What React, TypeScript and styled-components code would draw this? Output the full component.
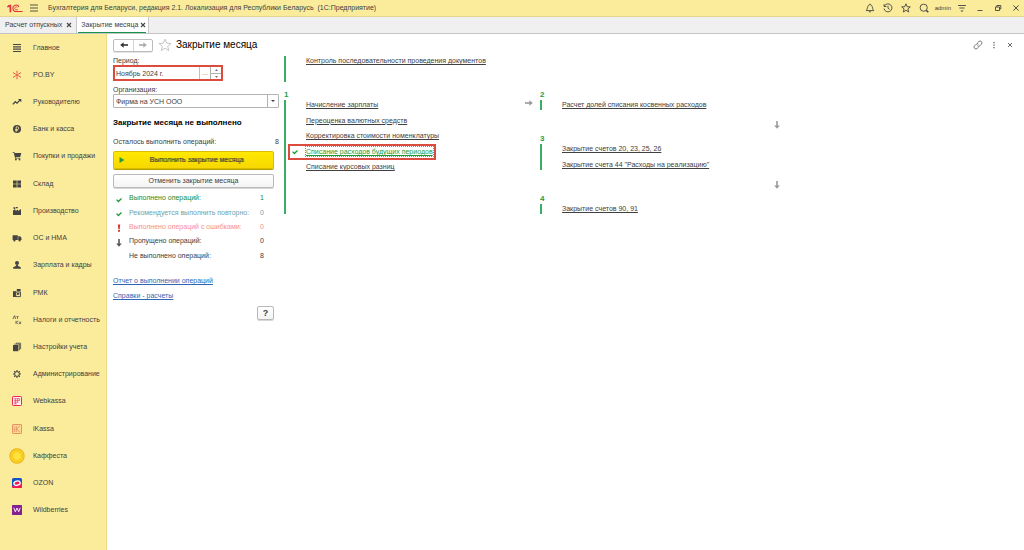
import React from "react";
import styled, { createGlobalStyle, css } from "styled-components";

const GlobalStyle = createGlobalStyle`
  *, *::before, *::after { box-sizing: border-box; }
  body {
    margin: 0;
    background: #fff;
    color: #404040;
    font: 7px/10px "Liberation Sans", Arial, sans-serif;
  }
  button, input, select { font: inherit; color: inherit; }
  h1, h2, p, ul, dl, dd, dt { margin: 0; padding: 0; }
  ul { list-style: none; }
`;

const Page = styled.div`
  display: flex;
  flex-direction: column;
  min-height: 100vh;
`;

const Header = styled.header`
  display: flex;
  align-items: center;
  height: 17px;
  padding: 0 3px 0 7px;
  background: #fbec9c;
  border-bottom: 1px solid #e3d68e;
`;

const AppName = styled.span`
  flex: 1;
  margin-left: 9px;
  white-space: pre;
`;

const HeaderTools = styled.div`
  display: flex;
  align-items: center;
  gap: 8px;
`;

const WindowTools = styled(HeaderTools)`
  margin-left: 8px;
`;

const UserName = styled.span`
  margin: 0 -2px;
  font-size: 6px;
`;

const IconButton = styled.button`
  display: flex;
  align-items: center;
  justify-content: center;
  width: 10px;
  height: 10px;
  padding: 0;
  border: 0;
  background: none;
`;

const MenuButton = styled(IconButton)`
  margin-left: 6px;
`;

const Tabs = styled.nav`
  display: flex;
  height: 17px;
  background: #f0f0f0;
  border-bottom: 1px solid #c4c4c4;
`;

const Tab = styled.div<{ $active?: boolean }>`
  display: flex;
  align-items: center;
  gap: 4px;
  padding: 0 4px 0 5px;
  border-right: 1px solid #c8c8c8;
  ${(p) =>
    p.$active &&
    css`
      padding: 0 2px 0 1px;
      background: #fff;
    `}
`;

const TabLink = styled.a`
  color: inherit;
  text-decoration: none;
`;

const ActiveMark = styled.div`
  display: flex;
  align-items: center;
  gap: 2px;
  height: 15px;
  padding-left: 3px;
  border-bottom: 1px solid #14934b;
`;

const TabClose = styled(IconButton)`
  width: 6px;
  height: 8px;
`;

const Body = styled.div`
  display: flex;
  flex: 1;
`;

const Sidebar = styled.nav`
  display: flex;
  flex: none;
  width: 107px;
  padding-bottom: 26px;
  background: #fbec9c;
  border-right: 1px solid #eadb8a;
`;

const SectionList = styled.ul`
  display: grid;
  flex: 1;
  grid-auto-rows: minmax(20px, 1fr);
`;

const SectionLink = styled.a`
  display: flex;
  align-items: center;
  gap: 8px;
  height: 100%;
  padding-left: 9px;
  color: inherit;
  text-decoration: none;
  white-space: nowrap;
`;

const SectionIcon = styled.span`
  display: flex;
  justify-content: center;
  width: 16px;
`;

const Main = styled.main`
  flex: 1;
  min-width: 0;
  padding: 4px 6px 16px;
`;

const TitleBar = styled.div`
  display: flex;
  align-items: center;
  height: 14px;
`;

const NavButtons = styled.div`
  display: flex;
  height: 13px;
  border: 1px solid #bdbdbd;
  border-radius: 2px;
  box-shadow: 0 1px #e4e4e4;
`;

const NavButton = styled(IconButton)`
  width: 19px;
  height: 11px;
  & + & { border-left: 1px solid #d4d4d4; }
`;

const FavoriteButton = styled(IconButton)`
  width: 14px;
  height: 14px;
  margin: 0 4px 0 5px;
`;

const Title = styled.h1`
  flex: 1;
  color: #000;
  font-size: 10px;
  font-weight: 400;
  line-height: 14px;
`;

const TitleTools = styled.div`
  display: flex;
  gap: 6px;
  padding-right: 3px;
`;

const Content = styled.div`
  display: flex;
  align-items: flex-start;
  gap: 5px;
  padding-top: 4px;
`;

const Form = styled.form`
  display: flex;
  flex: none;
  flex-direction: column;
  width: 166px;
`;

const FieldLabel = styled.label`
  display: block;
  line-height: 9px;
`;

const fieldText = css`
  min-width: 0;
  padding: 1px 0 0 2px;
  border: 0;
  background: none;
  outline: 0;
`;

const PeriodBox = styled.div`
  display: flex;
  width: 110px;
  height: 16px;
  margin-bottom: 4px;
  border: 2px solid #dc4c3e;
  background: #fff;
`;

const PeriodInput = styled.input`
  ${fieldText}
  flex: 1;
  padding-left: 1px;
`;

const PickButton = styled(IconButton)`
  width: 11px;
  height: 12px;
  border-left: 1px solid #c0c0c0;
  color: #777;
`;

const Spinner = styled.div`
  display: flex;
  flex-direction: column;
  width: 11px;
  border-left: 1px solid #b0b0b0;
`;

const SpinButton = styled(IconButton)`
  width: 10px;
  height: 6px;
  & + & { border-top: 1px solid #b0b0b0; }
`;

const SelectBox = styled.div`
  display: flex;
  position: relative;
  height: 14px;
  margin-bottom: 9px;
  border: 1px solid #b4b4b4;
  border-radius: 1px;
`;

const Select = styled.select`
  ${fieldText}
  flex: 1;
  appearance: none;
`;

const SelectArrow = styled.span`
  display: flex;
  position: absolute;
  top: 0;
  right: 0;
  bottom: 0;
  align-items: center;
  justify-content: center;
  width: 11px;
  border-left: 1px solid #b4b4b4;
  pointer-events: none;
`;

const StateHeading = styled.h2`
  margin-bottom: 9px;
  color: #000;
  font-size: 8px;
  font-weight: 700;
  line-height: 11px;
`;

const Remaining = styled.p`
  display: flex;
  justify-content: space-between;
  margin-bottom: 4px;
`;

const ActionButton = styled.button<{ $primary?: boolean }>`
  display: flex;
  align-items: center;
  width: 161px;
  height: 14px;
  padding: 0 5px;
  border: 1px solid #b8b8b8;
  border-radius: 2px;
  background: linear-gradient(#fff, #f4f4f4);
  box-shadow: 0 1px #d8d8d8;
  ${(p) =>
    p.$primary &&
    css`
      height: 18px;
      margin-bottom: 5px;
      border-color: #d9bd00;
      background: linear-gradient(#ffe900, #f7d700);
      box-shadow: 0 1px #b89e00;
      text-shadow: 1px 0 rgba(64, 64, 64, 0.5);
    `}
`;

const ActionText = styled.span`
  flex: 1;
  text-align: center;
`;

const StatusList = styled.dl`
  display: grid;
  grid-auto-rows: 1fr;
  height: 72px;
  margin: 3px 0 13px;
`;

const StatusRow = styled.div<{ $color?: string }>`
  display: grid;
  grid-template-columns: 16px 1fr 19px;
  align-items: center;
  color: ${(p) => p.$color || "inherit"};
`;

const StatusMark = styled.span`
  display: flex;
  width: 11px;
  padding-top: 3px;
  justify-content: center;
`;

const ReportLinks = styled.div`
  display: flex;
  flex-direction: column;
  align-items: flex-start;
  gap: 5px;
`;

const ReportLink = styled.a`
  color: #2f66b4;
`;

const HelpButton = styled.button`
  width: 17px;
  height: 14px;
  margin: 5px 5px 0 auto;
  padding: 0;
  border: 1px solid #b8b8b8;
  border-radius: 2px;
  background: linear-gradient(#fff, #f4f4f4);
  box-shadow: 0 1px #d8d8d8;
  font-size: 9px;
  font-weight: 700;
  line-height: 10px;
`;

const Flow = styled.div`
  flex: 1;
`;

const Stages = styled.div`
  display: grid;
  grid-template-columns: 241px 15px 1fr;
  margin-top: 8px;
`;

const Stage = styled.section`
  display: flex;
  flex-direction: column;
`;

const StageNumber = styled.h2`
  margin-bottom: 1px;
  color: #1f9d4e;
  font-size: 8px;
  font-weight: 700;
  line-height: 9px;
`;

const StageLine = styled.div<{ $height: number }>`
  min-height: ${(p) => p.$height}px;
  border-left: 2px solid #3aae66;
`;

const OperationList = styled.ul<{ $count: number }>`
  display: flex;
  flex-direction: column;
  justify-content: space-between;
  height: ${(p) => [10, 10, 26, 42, 57, 72][p.$count]}px;
  padding-left: 20px;
`;

const Operation = styled.li`
  height: 10px;
  white-space: nowrap;
`;

const OperationLink = styled.a`
  color: inherit;
`;

const Highlight = styled.div`
  display: flex;
  align-items: center;
  gap: 8px;
  width: 148px;
  height: 16px;
  margin: -3px 0 -3px -18px;
  padding-left: 2px;
  border: 2px solid #dc4c3e;
  color: #1c9b35;
`;

const FocusedLink = styled(OperationLink)`
  outline: 1px dotted #8a8a8a;
  line-height: 9px;
`;

const StageColumn = styled.div`
  display: flex;
  flex-direction: column;
`;

const NextRight = styled.div`
  padding-top: 9px;
`;

const NextDown = styled.div`
  display: flex;
  align-items: center;
  justify-content: flex-end;
  width: 241px;
  height: 24px;
  padding-top: 5px;
`;

const Check = () => (
  <svg width="6" height="6" viewBox="0 0 6 6" fill="none" stroke="#1c9b35" strokeWidth="1.3">
    <path d="M.6 2.6 2.4 4.5 5.5 1.5" />
  </svg>
);

const CrossIcon = ({ size = 6, width = 1 }: { size?: number; width?: number }) => (
  <svg width={size} height={size} viewBox="0 0 6 6" stroke="#444" strokeWidth={width}>
    <path d="M1 1 5 5M5 1 1 5" />
  </svg>
);

const Arrow = ({ dir, color }: { dir: "left" | "right" | "down"; color: string }) => {
  const turn = { right: 0, down: 90, left: 180 }[dir];
  return (
    <svg width="8" height="8" viewBox="0 0 8 8" fill="none" stroke={color} strokeWidth="1.6">
      <g transform={`rotate(${turn} 4 4)`}>
        <path d="M0 4H6" />
        <path d="M4.4 1.2 7.8 4 4.4 6.8Z" fill={color} stroke="none" />
      </g>
    </svg>
  );
};

const Tool = ({ children }: { children: React.ReactNode }) => (
  <svg width="10" height="10" viewBox="0 0 10 10" fill="none" stroke="#444" strokeWidth=".9">
    {children}
  </svg>
);

const Logo = () => (
  <svg width="16" height="9" viewBox="0 0 16 9" fill="none" stroke="#e0303a">
    <path d="M.4 2.9 2.6 1.6M3.4 .8V8.2" strokeWidth="1.7" />
    <path d="M12 3A3.2 3.2 0 1 0 9.2 7.5H15.6" strokeWidth="1.1" />
    <path d="M10.4 3.5A1.4 1.4 0 1 0 9.2 5.7H11" strokeWidth=".8" />
  </svg>
);

const starPath = "M5 .8 6.2 3.7 9.3 3.9 6.9 5.9 7.7 9 5 7.3 2.3 9 3.1 5.9 .7 3.9 3.8 3.7Z";

const Glyph = ({ children, size = 10 }: { children: React.ReactNode; size?: number }) => (
  <svg width={size} height={size} viewBox="0 0 10 10" fill="#444">
    {children}
  </svg>
);

const glyphs: Record<string, React.ReactNode> = {
  main: <Glyph><path d="M1 1h8v1.1H1zM1 3.3h8v1.1H1zM1 5.6h8v1.1H1zM1 7.9h8V9H1z" /></Glyph>,
  po: (
    <Glyph>
      <path d="M5 .8V3.6M5 6.4V9.2M1 2.6 3.8 4.3M6.2 5.7 9 7.4M1 7.4 3.8 5.7M6.2 4.3 9 2.6" stroke="#e8433a" strokeWidth=".9" />
      <circle cx="5" cy="5" r="1" fill="#e8433a" />
    </Glyph>
  ),
  lead: <Glyph><path d="M.8 7.4 3.3 4.7 5 6.2 8 3.1" fill="none" stroke="#444" strokeWidth="1.3" /><path d="M6 2H9.3V5.2Z" /></Glyph>,
  bank: (
    <Glyph>
      <circle cx="5" cy="5" r="4" />
      <path d="M4.2 7.8V2.8H5.4A1.3 1.3 0 0 1 5.4 5.5H3.2M3.2 6.6H5.8" fill="none" stroke="#fbec9c" strokeWidth=".8" />
    </Glyph>
  ),
  cart: <Glyph><path d="M.6 1H2.3L2.7 2.1H9.3L8.2 5.9H3.6L3.8 6.7H8.3V7.4H3.1L1.8 1.8H.6Z" /><circle cx="3.9" cy="8.5" r=".9" /><circle cx="7.5" cy="8.5" r=".9" /></Glyph>,
  store: <Glyph><path d="M1 1.6H4.7V4.7H1zM5.3 1.6H9V4.7H5.3zM1 5.3H4.7V8.4H1zM5.3 5.3H9V8.4H5.3z" /></Glyph>,
  factory: <Glyph><path d="M1 9V4.5L2.4 3.6H3.6V5L6 3.6V5L9 3V9ZM1.2 1.3H3.2V3H1.8ZM3.8 1H5.8V2.2H3.8Z" /></Glyph>,
  truck: <Glyph><path d="M.6 2.2H5.8V7H.6zM6.2 3.2H8.2L9.5 5V7H6.2z" /><circle cx="2.4" cy="7.4" r="1.1" /><circle cx="7.6" cy="7.4" r="1.1" /></Glyph>,
  person: <Glyph><circle cx="5" cy="2.9" r="2" /><path d="M1.2 8.8V7.2L3.8 6 4.2 5H5.8L6.2 6 8.8 7.2V8.8Z" /></Glyph>,
  pos: (
    <Glyph>
      <path d="M1 3.2H4V9H1z" />
      <path d="M3.8 4H8.5V8.6H3.8z" fill="#fbec9c" stroke="#444" strokeWidth=".9" />
      <path d="M4.8 1H8.6V3.2H4.8zM5 5H7.3V6.8H5z" />
    </Glyph>
  ),
  tax: (
    <Glyph>
      <path d="M1 4V3.2H1.5L2.2.9H3V3.2H3.6V4M4.4 1.6H6.6M5.5 1.6V3.8M4 5.8V9M6.2 5.8 4.4 7.3 6.4 9M7.1 6.5 9 9M9 6.5 7.1 9" fill="none" stroke="#555" strokeWidth=".8" />
    </Glyph>
  ),
  books: <Glyph><path d="M1 3H6.4V9.2H1z" /><path d="M2.4 2.1H7.4V8.2M4 1.2H8.6V7.2" fill="none" stroke="#444" strokeWidth=".8" /></Glyph>,
  gear: (
    <Glyph>
      <circle cx="5" cy="5" r="2.4" fill="none" stroke="#444" strokeWidth="1" />
      <path d="M5 1V2.6M5 7.4V9M1 5H2.6M7.4 5H9M2.2 2.2 3.3 3.3M6.7 6.7 7.8 7.8M7.8 2.2 6.7 3.3M3.3 6.7 2.2 7.8" stroke="#444" strokeWidth="1.1" />
    </Glyph>
  ),
  webkassa: (
    <Glyph>
      <rect x=".5" y=".5" width="9" height="9" rx=".8" fill="#fff0ee" stroke="#ee2450" />
      <path d="M2.2 2.6H7.8M2.2 4.4H7.8M2.2 6.2H6.4M2.2 7.8H4.8M3.4 2.6V7.8M5.6 2.6V6.4M7.6 2.6V4.6" stroke="#ee2450" strokeWidth=".6" />
    </Glyph>
  ),
  ikassa: (
    <Glyph>
      <rect x=".5" y=".5" width="9" height="9" rx=".6" fill="#fbdd8d" stroke="#e07a5c" strokeWidth=".8" />
      <path d="M2.3 3.6V8M2.3 2V2.7M4.2 2V8M7.8 2 4.4 5 7.9 8" fill="none" stroke="#e07a5c" strokeWidth=".7" />
    </Glyph>
  ),
  kaffesta: (
    <Glyph size={16}>
      <circle cx="5" cy="5" r="4.8" fill="#e8b21c" />
      <circle cx="5" cy="5" r="4.2" fill="#fbd21e" />
      <circle cx="5" cy="5" r="2.8" fill="#ffe23c" stroke="#efbf1e" strokeWidth=".4" />
    </Glyph>
  ),
  ozon: (
    <Glyph>
      <rect width="10" height="10" rx="1.6" fill="#1053c8" />
      <path d="M0 7.5Q5 9 10 4.5V8.4A1.6 1.6 0 0 1 8.4 10H1.6A1.6 1.6 0 0 1 0 8.4Z" fill="#f21c55" />
      <ellipse cx="5" cy="5.1" rx="3.2" ry="2.1" transform="rotate(-14 5 5)" fill="#f21c55" stroke="#fff" strokeWidth="1.4" />
    </Glyph>
  ),
  wb: (
    <Glyph>
      <rect width="10" height="10" rx=".6" fill="#84208f" />
      <path d="M1.8 2.8 3.3 6.8 5 3 6.7 6.8 8.2 2.8" fill="none" stroke="#fff" strokeWidth=".9" />
    </Glyph>
  ),
};

const sections: [string, string][] = [
  ["main", "Главное"],
  ["po", "PO.BY"],
  ["lead", "Руководителю"],
  ["bank", "Банк и касса"],
  ["cart", "Покупки и продажи"],
  ["store", "Склад"],
  ["factory", "Производство"],
  ["truck", "ОС и НМА"],
  ["person", "Зарплата и кадры"],
  ["pos", "РМК"],
  ["tax", "Налоги и отчетность"],
  ["books", "Настройки учета"],
  ["gear", "Администрирование"],
  ["webkassa", "Webkassa"],
  ["ikassa", "iKassa"],
  ["kaffesta", "Каффеста"],
  ["ozon", "OZON"],
  ["wb", "Wildberries"],
];

const statuses: { text: string; count: number; color?: string; mark?: React.ReactNode }[] = [
  { text: "Выполнено операций:", count: 1, color: "#1c8b2c", mark: <Check /> },
  { text: "Рекомендуется выполнить повторно:", count: 0, color: "#6fa3a8", mark: <Check /> },
  {
    text: "Выполнено операций с ошибками:",
    count: 0,
    color: "#f98e8e",
    mark: (
      <svg width="4" height="8" viewBox="0 0 4 8" fill="#d8392e">
        <path d="M.8.4H3.2L2.7 5.2H1.3ZM1 6H3V7.8H1Z" />
      </svg>
    ),
  },
  { text: "Пропущено операций:", count: 0, mark: <Arrow dir="down" color="#555" /> },
  { text: "Не выполнено операций:", count: 8 },
];

const StageBody = ({ items, height, done }: { items: string[]; height: number; done?: string }) => (
  <StageLine $height={height}>
    <OperationList $count={items.length}>
      {items.map((item) => (
        <Operation key={item}>
          {item === done ? (
            <Highlight>
              <Check />
              <FocusedLink href="#">{item}</FocusedLink>
            </Highlight>
          ) : (
            <OperationLink href="#">{item}</OperationLink>
          )}
        </Operation>
      ))}
    </OperationList>
  </StageLine>
);

export default function App() {
  return (
    <Page>
      <GlobalStyle />
      <Header>
        <Logo />
        <MenuButton aria-label="Меню">
          <Tool><path d="M1 2H9M1 5H9M1 8H9" /></Tool>
        </MenuButton>
        <AppName>{"Бухгалтерия для Беларуси, редакция 2.1. Локализация для Республики Беларусь  (1С:Предприятие)"}</AppName>
        <HeaderTools>
          <IconButton aria-label="Уведомления">
            <Tool><path d="M1.2 7.6C2.8 6.4 2.2 1.6 5 1.6S7.2 6.4 8.8 7.6ZM4 8.8H6M5 .8V1.6" /></Tool>
          </IconButton>
          <IconButton aria-label="История">
            <Tool><path d="M1.3 3.2A4 4 0 1 1 1 5.6M1.1 1.2V3.5H3.4M5 2.8V5.2L6.6 6.4" /></Tool>
          </IconButton>
          <IconButton aria-label="Избранное">
            <Tool><path d={starPath} /></Tool>
          </IconButton>
          <IconButton aria-label="Поиск">
            <Tool><circle cx="4.7" cy="4.7" r="3.6" /><path d="M7.2 7.2 9.3 9.2" strokeWidth="1.5" /></Tool>
          </IconButton>
          <UserName>admin</UserName>
          <IconButton aria-label="Настройки">
            <Tool><path d="M1 2.5H9M2.4 5H7.6" /><path d="M3.4 7.4H6.6L5 9Z" fill="#444" stroke="none" /></Tool>
          </IconButton>
        </HeaderTools>
        <WindowTools>
          <IconButton aria-label="Свернуть">
            <Tool><path d="M2.5 7.5H7.5" /></Tool>
          </IconButton>
          <IconButton aria-label="Развернуть">
            <Tool><path d="M2.5 4H6.5V7.5H2.5ZM3.8 4V2.5H7.8V6H6.5" /></Tool>
          </IconButton>
          <IconButton aria-label="Закрыть"><CrossIcon size={8} width={0.7} /></IconButton>
        </WindowTools>
      </Header>
      <Tabs>
        <Tab>
          <TabLink href="#">Расчет отпускных</TabLink>
          <TabClose aria-label="Закрыть вкладку"><CrossIcon width={1.1} /></TabClose>
        </Tab>
        <Tab $active>
          <ActiveMark>
            <TabLink href="#">Закрытие месяца</TabLink>
            <TabClose aria-label="Закрыть вкладку"><CrossIcon width={1.1} /></TabClose>
          </ActiveMark>
        </Tab>
      </Tabs>
      <Body>
        <Sidebar>
          <SectionList>
            {sections.map(([icon, name]) => (
              <li key={name}>
                <SectionLink href="#">
                  <SectionIcon>{glyphs[icon]}</SectionIcon>
                  {name}
                </SectionLink>
              </li>
            ))}
          </SectionList>
        </Sidebar>
        <Main>
          <TitleBar>
            <NavButtons>
              <NavButton aria-label="Назад"><Arrow dir="left" color="#333" /></NavButton>
              <NavButton aria-label="Вперед"><Arrow dir="right" color="#aaa" /></NavButton>
            </NavButtons>
            <FavoriteButton aria-label="В избранное">
              <svg width="14" height="14" viewBox="0 0 10 10" fill="none" stroke="#bbb" strokeWidth=".6">
                <path d={starPath} />
              </svg>
            </FavoriteButton>
            <Title>Закрытие месяца</Title>
            <TitleTools>
              <IconButton aria-label="Ссылка">
                <Tool>
                  <path d="M4.2 3.2 5.8 1.6A1.6 1.6 0 0 1 8.4 4.2L6.8 5.8A1.6 1.6 0 0 1 4.4 5.6M5.8 6.8 4.2 8.4A1.6 1.6 0 0 1 1.6 5.8L3.2 4.2A1.6 1.6 0 0 1 5.6 4.4" strokeWidth=".7" />
                </Tool>
              </IconButton>
              <IconButton aria-label="Еще">
                <Tool><path d="M4.4 2H5.6V3.2H4.4ZM4.4 4.5H5.6V5.7H4.4ZM4.4 7H5.6V8.2H4.4Z" fill="#555" stroke="none" /></Tool>
              </IconButton>
              <IconButton aria-label="Закрыть"><CrossIcon width={0.8} /></IconButton>
            </TitleTools>
          </TitleBar>
          <Content>
            <Form onSubmit={(e) => e.preventDefault()}>
              <FieldLabel htmlFor="period">Период:</FieldLabel>
              <PeriodBox>
                <PeriodInput id="period" defaultValue="Ноябрь 2024 г." />
                <PickButton type="button" aria-label="Выбрать период">...</PickButton>
                <Spinner>
                  <SpinButton type="button" aria-label="Следующий">
                    <svg width="3" height="2" viewBox="0 0 3 2" fill="#777"><path d="M0 2 1.5 0 3 2Z" /></svg>
                  </SpinButton>
                  <SpinButton type="button" aria-label="Предыдущий">
                    <svg width="3" height="2" viewBox="0 0 3 2" fill="#777"><path d="M0 0 1.5 2 3 0Z" /></svg>
                  </SpinButton>
                </Spinner>
              </PeriodBox>
              <FieldLabel htmlFor="company">Организация:</FieldLabel>
              <SelectBox>
                <Select id="company">
                  <option>Фирма на УСН ООО</option>
                </Select>
                <SelectArrow>
                  <svg width="4" height="2" viewBox="0 0 4 2" fill="#444"><path d="M0 0 2 2 4 0Z" /></svg>
                </SelectArrow>
              </SelectBox>
              <StateHeading>Закрытие месяца не выполнено</StateHeading>
              <Remaining>
                <span>Осталось выполнить операций:</span>
                <span>8</span>
              </Remaining>
              <ActionButton type="button" $primary>
                <svg width="6" height="6" viewBox="0 0 6 6" fill="#2c9a3c"><path d="M.5 0 5.5 3 .5 6Z" /></svg>
                <ActionText>Выполнить закрытие месяца</ActionText>
              </ActionButton>
              <ActionButton type="button">
                <ActionText>Отменить закрытие месяца</ActionText>
              </ActionButton>
              <StatusList>
                {statuses.map((s) => (
                  <StatusRow key={s.text} $color={s.color}>
                    <StatusMark>{s.mark}</StatusMark>
                    <dt>{s.text}</dt>
                    <dd>{s.count}</dd>
                  </StatusRow>
                ))}
              </StatusList>
              <ReportLinks>
                <ReportLink href="#">Отчет о выполнении операций</ReportLink>
                <ReportLink href="#">Справки - расчеты</ReportLink>
              </ReportLinks>
              <HelpButton type="button">?</HelpButton>
            </Form>
            <Flow>
              <StageBody height={26} items={["Контроль последовательности проведения документов"]} />
              <Stages>
                <Stage>
                  <StageNumber>1</StageNumber>
                  <StageBody
                    height={114}
                    done="Списание расходов будущих периодов"
                    items={[
                      "Начисление зарплаты",
                      "Переоценка валютных средств",
                      "Корректировка стоимости номенклатуры",
                      "Списание расходов будущих периодов",
                      "Списание курсовых разниц",
                    ]}
                  />
                </Stage>
                <NextRight><Arrow dir="right" color="#999" /></NextRight>
                <StageColumn>
                  <Stage>
                    <StageNumber>2</StageNumber>
                    <StageBody height={10} items={["Расчет долей списания косвенных расходов"]} />
                  </Stage>
                  <NextDown><Arrow dir="down" color="#999" /></NextDown>
                  <Stage>
                    <StageNumber>3</StageNumber>
                    <StageBody height={26} items={["Закрытие счетов 20, 23, 25, 26", 'Закрытие счета 44 "Расходы на реализацию"']} />
                  </Stage>
                  <NextDown><Arrow dir="down" color="#999" /></NextDown>
                  <Stage>
                    <StageNumber>4</StageNumber>
                    <StageBody height={10} items={["Закрытие счетов 90, 91"]} />
                  </Stage>
                </StageColumn>
              </Stages>
            </Flow>
          </Content>
        </Main>
      </Body>
    </Page>
  );
}
